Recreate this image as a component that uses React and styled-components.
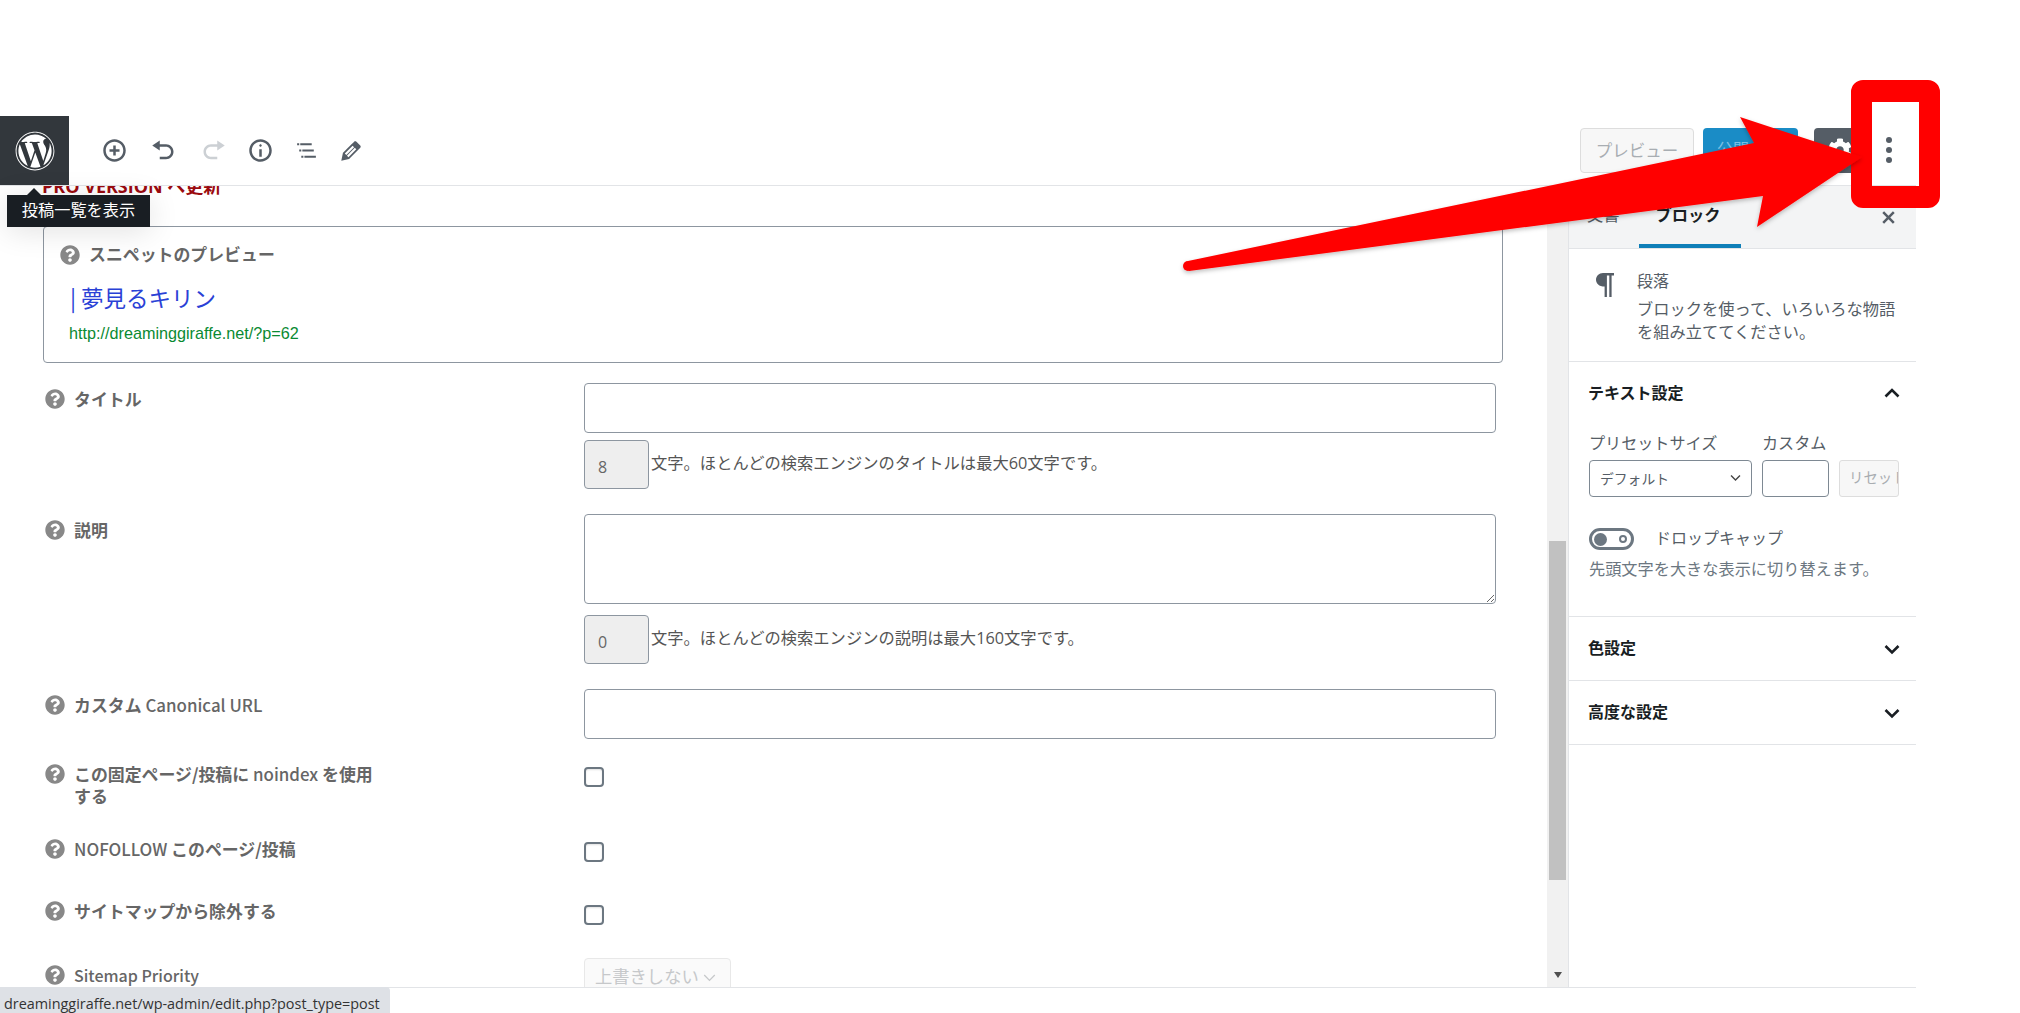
import React from "react";
import styled, { createGlobalStyle } from "styled-components";
import { FaWordpress, FaQuestionCircle, FaCog } from "react-icons/fa";

const Global = createGlobalStyle`
  html, body { margin: 0; padding: 0; background: #fff; overflow: hidden; }
  * { box-sizing: border-box; }
  body { font-family: "Open Sans", "Noto Sans CJK JP", sans-serif; font-size: 16px; color: #555d66; }
`;

const Page = styled.div`position: relative; width: 2020px; height: 1013px; background: #fff; overflow: hidden;`;
const Editor = styled.div`display: flex; flex-direction: column; width: 1916px; height: 1013px; padding-top: 116px;`;

const Header = styled.header`display: flex; align-items: center; height: 70px; border-bottom: 1px solid #e2e4e7; flex: none;`;
const LogoTile = styled.div`display: flex; align-items: center; justify-content: center; width: 69px; height: 69px; background: #32373c; color: #fff; font-size: 40px;`;
const Tools = styled.div`display: flex; align-items: center; margin-left: 21px;`;
const ToolButton = styled.div`display: flex; justify-content: center; align-items: center; width: ${p => p.$w}px; height: 48px; color: ${p => (p.$off ? "#ccd0d4" : "#555d66")};`;
const Actions = styled.div`display: flex; align-items: center; margin-left: auto; padding-right: 4px; padding-bottom: 1px;`;
const PreviewBtn = styled.div`display: flex; align-items: center; justify-content: center; width: 114px; height: 45px; background: #f7f7f7; border: 1px solid #dddddd; border-radius: 4px; color: #a8adb2; font-size: 16.5px; margin-right: 9px;`;
const PublishBtn = styled.div`width: 95px; height: 45px; background: #1a8cc6; border-radius: 4px; color: #7cc0e4; font-size: 16px; line-height: 43px; padding-left: 14px; margin-right: 16px;`;
const GearBtn = styled.div`display: flex; align-items: center; justify-content: center; width: 52px; height: 45px; background: #555d66; border-radius: 4px; color: #fff; font-size: 24px;`;
const MoreBtn = styled.div`display: flex; align-items: center; justify-content: center; width: 46px; height: 45px; color: #555d66;`;

const Main = styled.main`display: flex; flex: none; height: 801px;`;
const Content = styled.div`width: 1547px; height: 801px; overflow: hidden; padding-left: 43px; flex: none;`;
const ProLine = styled.div`margin: -11px 0 29px -1px; font-size: 18px; line-height: 22px; font-weight: 700; color: #9b0a0f;`;
const SnippetBox = styled.section`width: 1460px; height: 137px; border: 1px solid #8d96a0; border-radius: 4px; padding: 17px 26px 0 3px; margin-bottom: 20px;`;
const SnippetHead = styled.div`display: flex; align-items: center; gap: 9px; padding-left: 13px; line-height: 22px; font-weight: 700; font-size: 16.9px; color: #666;`;
const SnippetTitle = styled.div`margin: 16px 0 0 23px; font-size: 22.5px; line-height: 30px; color: #2a41d6; font-family: "Noto Sans CJK JP", sans-serif;`;
const SnippetUrl = styled.div`margin: 10px 0 0 22px; font-size: 16.2px; line-height: 22px; color: #0a8a32; font-family: "Liberation Sans", sans-serif;`;
const HelpIcon = styled(FaQuestionCircle)`width: 20px; height: 20px; color: #888; flex: none;`;

const Rows = styled.div`display: flex; flex-direction: column; gap: 25px;`;
const Row = styled.div`display: grid; grid-template-columns: 541px 912px; min-height: ${p => p.$h}px; flex: none;`;
const Label = styled.div`display: grid; grid-template-columns: 20px 1fr; column-gap: 9px; align-items: start; margin-top: ${p => p.$top}px; padding-left: 2px; width: 332px; font-family: "Noto Sans CJK JP", sans-serif; font-size: 16.9px; line-height: 22px; color: #666;`;
const IconCell = styled.div`display: flex; height: 22px; align-items: center;`;
const LabelText = styled.div`font-weight: 700;`;
const Latin = styled.span`font-weight: 500; font-size: ${p => p.$size || 16.9}px;`;
const Field = styled.div`display: flex; flex-direction: column; align-items: flex-start;`;
const TextInput = styled.input`width: 912px; height: 50px; border: 1px solid #8d96a0; border-radius: 4px; background: #fff; padding: 0 10px; flex: none;`;
const TextArea = styled.textarea`display: block; width: 912px; height: 90px; border: 1px solid #8d96a0; border-radius: 4px; background: #fff; flex: none;`;
const CountRow = styled.div`display: flex; align-items: center; margin-top: ${p => p.$mt}px; font-size: 16.3px; color: #555;`;
const CountBox = styled.input`width: 65px; height: 49px; border: 1px solid #8d96a0; border-radius: 4px; background: #eeeeee; color: #666; padding: 4px 0 0 13px; font: 16px "Open Sans", sans-serif;`;
const CountText = styled.span`margin: -5px 0 0 2px;`;
const CheckBox = styled.input.attrs({ type: "checkbox" })`appearance: none; width: 20px; height: 20px; margin: 0; border: 2px solid #6c7781; border-radius: 4px; background: #fff; box-shadow: inset 0 1px 2px rgba(0,0,0,.12);`;
const DisabledSelect = styled.div`display: flex; align-items: flex-start; width: 147px; height: 50px; border: 1px solid #e8e8e8; border-radius: 4px; background: #fafafa; color: #c6c8ca; font-size: 17.3px; line-height: 24px; padding: 6px 0 0 10px; gap: 4px; svg { margin-top: 6px; }`;

const Track = styled.div`display: flex; flex-direction: column; width: 21px; height: 801px; background: #f1f1f1; padding: 355px 2px 9px; flex: none;`;
const Thumb = styled.div`height: 339px; background: #c1c1c1;`;
const ScrollArrow = styled.div`margin: auto auto 0; width: 0; height: 0; border-left: 4px solid transparent; border-right: 4px solid transparent; border-top: 6px solid #505050;`;

const Sidebar = styled.aside`width: 348px; height: 801px; border-left: 1px solid #e2e4e7; background: #fff; flex: none;`;
const TabBar = styled.div`display: flex; align-items: stretch; height: 63px; background: #f3f4f5; border-bottom: 1px solid #e2e4e7; position: relative;`;
const Tab = styled.div`display: flex; align-items: center; height: 62px; padding: 2px ${p => p.$pr}px 4px ${p => p.$pl}px; font-size: 16.25px; color: ${p => (p.$on ? "#191e23" : "#555d66")}; font-weight: ${p => (p.$on ? 700 : 400)}; border-bottom: 4px solid ${p => (p.$on ? "#0f7fb8" : "transparent")};`;
const CloseBtn = styled.div`display: flex; align-items: center; margin-left: auto; padding: 0 15px 0 0; color: #555d66;`;
const BlockInfo = styled.div`display: grid; grid-template-columns: 68px 1fr; height: 113px; padding: 21px 10px 0 0; border-bottom: 1px solid #e2e4e7;`;
const ParaIcon = styled.div`display: flex; justify-content: center; padding: 2px 0 0 4px; color: #555d66;`;
const BlockTitle = styled.div`font-size: 16px; line-height: 22px; color: #555d66; margin-bottom: 6px;`;
const BlockDesc = styled.div`font-size: 16.25px; line-height: 23px; color: #555d66;`;
const Panel = styled.section`border-bottom: 1px solid #e2e4e7; height: ${p => p.$h}px; padding: 0 16px 0 20px;`;
const PanelHead = styled.div`display: flex; align-items: center; justify-content: space-between; height: ${p => p.$h}px; font-size: 16px; font-weight: 700; color: #191e23;`;
const PanelTitle = styled.span`margin-top: ${p => p.$up}px; margin-left: -1px;`;
const SizeGrid = styled.div`display: grid; grid-template-columns: 163px 67px 60px; column-gap: 10px; row-gap: 6px; margin-top: 8px;`;
const SizeLabel = styled.div`font-size: 16.1px; line-height: 22px; color: #555d66; grid-column: span ${p => p.$span || 1};`;
const SizeSelect = styled.div`display: flex; align-items: center; justify-content: space-between; height: 37px; border: 1px solid #7e8993; border-radius: 4px; padding: 0 10px 2px; font-size: 13.8px; color: #555d66;`;
const SizeInput = styled.input`width: 67px; height: 37px; border: 1px solid #7e8993; border-radius: 4px; background: #fff;`;
const ResetBtn = styled.div`height: 37px; border: 1px solid #dddddd; border-radius: 3px; background: #f7f7f7; color: #a9adb1; font-size: 14.4px; line-height: 34px; padding-left: 9px; overflow: hidden; white-space: nowrap;`;
const ToggleRow = styled.div`display: flex; align-items: center; gap: 21px; margin-top: 31px; font-size: 16px; line-height: 20px; color: #555d66; height: 22px;`;
const ToggleLabel = styled.span`margin-top: -2px;`;
const Toggle = styled.div`display: flex; align-items: center; justify-content: space-between; width: 45px; height: 22px; border: 3px solid #6c7781; border-radius: 11px; padding: 0 4px 0 2px;`;
const ToggleDot = styled.div`width: 13px; height: 13px; border-radius: 50%; background: #6c7781;`;
const ToggleRing = styled.div`width: 8px; height: 8px; border-radius: 50%; border: 2px solid #6c7781;`;
const HelpText = styled.div`margin-top: 8px; font-size: 16.2px; line-height: 22px; color: #6c7781;`;

const Footer = styled.footer`flex: none; height: 26px; border-top: 1px solid #e2e4e7; background: #fff;`;

const Tooltip = styled.div`position: absolute; left: 7px; top: 195px; width: 143px; height: 32px; background: #191e23; color: #fff; font-size: 16.2px; line-height: 31px; text-align: center; box-shadow: 0 4px 30px rgba(0,0,0,.12);
  &::before { content: ""; position: absolute; left: 20px; top: -7px; border-left: 7px solid transparent; border-right: 7px solid transparent; border-bottom: 7px solid #191e23; }`;
const StatusBar = styled.div`position: absolute; left: 0; top: 987px; width: 390px; height: 26px; background: #dee1e6; border-top-right-radius: 4px; color: #333; font-size: 14.4px; line-height: 25px; padding: 4px 0 0 4px; white-space: nowrap;`;
const RedFrame = styled.div`position: absolute; left: 1851px; top: 80px; width: 89px; height: 128px; border-style: solid; border-color: #ff0000; border-width: 22px 21px; border-radius: 12px;`;
const ArrowLayer = styled.svg`position: absolute; left: 0; top: 0; pointer-events: none;`;

const Dash = ({ d, size = 25, box = 20 }) => (
  <svg width={size} height={size} viewBox={`0 0 ${box} ${box}`} fill="currentColor"><path d={d} /></svg>
);
const Chevron = ({ up, size = 16, sw = 2.6, color = "#191e23" }) => (
  <svg width={size} height={size} viewBox="0 0 16 16" fill="none" stroke={color} strokeWidth={sw}>
    <polyline points={up ? "1.5,11.5 8,5 14.5,11.5" : "1.5,5 8,11.5 14.5,5"} />
  </svg>
);

const toolItems = [
  { w: 48.5, d: "M10 1c-5 0-9 4-9 9s4 9 9 9 9-4 9-9-4-9-9-9zm0 16c-3.9 0-7-3.1-7-7s3.1-7 7-7 7 3.1 7 7-3.1 7-7 7zm1-11H9v3H6v2h3v3h2v-3h3V9h-3V6z" },
  { w: 50, d: "M12 5H7V2L1 6l6 4V7h5c2.2 0 4 1.8 4 4s-1.8 4-4 4H7v2h5c3.3 0 6-2.7 6-6s-2.7-6-6-6z" },
  { w: 49, off: true, d: "M8 5h5V2l6 4-6 4V7H8c-2.2 0-4 1.8-4 4s1.8 4 4 4h5v2H8c-3.3 0-6-2.7-6-6s2.7-6 6-6z" },
  { w: 46.5, d: "M9 15h2V9H9v6zm1-10c-.5 0-1 .5-1 1s.5 1 1 1 1-.5 1-1-.5-1-1-1zm0-4c-5 0-9 4-9 9s4 9 9 9 9-4 9-9-4-9-9-9zm0 16c-3.9 0-7-3.1-7-7s3.1-7 7-7 7 3.1 7 7-3.1 7-7 7z" },
  { w: 45, box: 24, d: "M5 5H3v2h2V5zm3 8h11v-2H8v2zm9-8H6v2h11V5zM7 11H5v2h2v-2zm0 8h2v-2H7v2zm3-2v2h11v-2H10z" },
  { w: 44, size: 28, d: "M13.89 3.39l2.71 2.72c.46.46.42 1.24.03 1.64l-8.01 8.02-5.56 1.16 1.16-5.58s7.6-7.63 7.99-8.03c.39-.39 1.22-.39 1.68.07zm-2.73 2.79l-5.59 5.61 1.11 1.11 5.54-5.65zm-2.97 8.23l5.58-5.6-1.07-1.08-5.59 5.6z" },
];

const FieldLabel = ({ top, children }) => (
  <Label $top={top}>
    <IconCell><HelpIcon /></IconCell>
    <LabelText>{children}</LabelText>
  </Label>
);

export default function App() {
  return (
    <Page>
      <Global />
      <Editor>
        <Header>
          <LogoTile><FaWordpress /></LogoTile>
          <Tools>
            {toolItems.map((t, i) => (
              <ToolButton key={i} $w={t.w} $off={t.off}><Dash d={t.d} box={t.box || 20} size={t.size || 25} /></ToolButton>
            ))}
          </Tools>
          <Actions>
            <PreviewBtn>プレビュー</PreviewBtn>
            <PublishBtn>公開</PublishBtn>
            <GearBtn><FaCog /></GearBtn>
            <MoreBtn>
              <svg width="8" height="28" viewBox="0 0 8 28" fill="currentColor">
                <circle cx="4" cy="4" r="3" /><circle cx="4" cy="14" r="3" /><circle cx="4" cy="24" r="3" />
              </svg>
            </MoreBtn>
          </Actions>
        </Header>
        <Main>
          <Content>
            <ProLine>PRO VERSION へ更新</ProLine>
            <SnippetBox>
              <SnippetHead><HelpIcon />スニペットのプレビュー</SnippetHead>
              <SnippetTitle>| 夢見るキリン</SnippetTitle>
              <SnippetUrl>http://dreaminggiraffe.net/?p=62</SnippetUrl>
            </SnippetBox>
            <Rows>
              <Row $h={106}>
                <FieldLabel top={5}>タイトル</FieldLabel>
                <Field>
                  <TextInput />
                  <CountRow $mt={7}><CountBox readOnly value="8" /><CountText>文字。ほとんどの検索エンジンのタイトルは最大60文字です。</CountText></CountRow>
                </Field>
              </Row>
              <Row $h={150}>
                <FieldLabel top={5}>説明</FieldLabel>
                <Field>
                  <TextArea />
                  <CountRow $mt={11}><CountBox readOnly value="0" /><CountText>文字。ほとんどの検索エンジンの説明は最大160文字です。</CountText></CountRow>
                </Field>
              </Row>
              <Row $h={53}>
                <FieldLabel top={5}>カスタム <Latin>Canonical URL</Latin></FieldLabel>
                <Field><TextInput /></Field>
              </Row>
              <Row $h={50}>
                <FieldLabel top={-4}>この固定ページ/投稿に <Latin>noindex</Latin> を使用する</FieldLabel>
                <Field><CheckBox /></Field>
              </Row>
              <Row $h={38}>
                <FieldLabel top={-4}><Latin>NOFOLLOW</Latin> このページ/投稿</FieldLabel>
                <Field><CheckBox /></Field>
              </Row>
              <Row $h={28}>
                <FieldLabel top={-5}>サイトマップから除外する</FieldLabel>
                <Field><CheckBox /></Field>
              </Row>
              <Row $h={50}>
                <FieldLabel top={6}><Latin $size={16}>Sitemap Priority</Latin></FieldLabel>
                <Field><DisabledSelect>上書きしない<Chevron size={13} sw={1.6} color="#c6c8ca" /></DisabledSelect></Field>
              </Row>
            </Rows>
          </Content>
          <Track>
            <Thumb />
            <ScrollArrow />
          </Track>
          <Sidebar>
            <TabBar>
              <Tab $pl={18} $pr={19}>文書</Tab>
              <Tab $on $pl={17} $pr={20}>ブロック</Tab>
              <CloseBtn><Dash d="M14.95 6.46L11.41 10l3.54 3.54-1.41 1.41L10 11.42l-3.53 3.53-1.42-1.42L8.58 10 5.05 6.47l1.42-1.42L10 8.58l3.54-3.53z" /></CloseBtn>
            </TabBar>
            <BlockInfo>
              <ParaIcon>
                <svg width="20" height="26" viewBox="0 0 20 26" fill="currentColor">
                  <path d="M8 1h11v2.4h-2.4V25h-2.3V3.4h-2.4V25H9.6V14.6C4 14.6 1 11.5 1 7.8S4 1 8 1z" />
                </svg>
              </ParaIcon>
              <div>
                <BlockTitle>段落</BlockTitle>
                <BlockDesc>ブロックを使って、いろいろな物語を組み立ててください。</BlockDesc>
              </div>
            </BlockInfo>
            <Panel $h={255}>
              <PanelHead $h={62}><PanelTitle $up={-2}>テキスト設定</PanelTitle><Chevron up /></PanelHead>
              <SizeGrid>
                <SizeLabel>プリセットサイズ</SizeLabel>
                <SizeLabel $span={2}>カスタム</SizeLabel>
                <SizeSelect>デフォルト<Chevron size={11} sw={2} color="#444" /></SizeSelect>
                <SizeInput />
                <ResetBtn>リセット</ResetBtn>
              </SizeGrid>
              <ToggleRow><Toggle><ToggleDot /><ToggleRing /></Toggle><ToggleLabel>ドロップキャップ</ToggleLabel></ToggleRow>
              <HelpText>先頭文字を大きな表示に切り替えます。</HelpText>
            </Panel>
            <Panel $h={64}><PanelHead $h={63}><PanelTitle $up={-4}>色設定</PanelTitle><Chevron /></PanelHead></Panel>
            <Panel $h={64}><PanelHead $h={63}><PanelTitle $up={-4}>高度な設定</PanelTitle><Chevron /></PanelHead></Panel>
          </Sidebar>
        </Main>
        <Footer />
      </Editor>
      <Tooltip>投稿一覧を表示</Tooltip>
      <StatusBar>dreaminggiraffe.net/wp-admin/edit.php?post_type=post</StatusBar>
      <RedFrame />
      <ArrowLayer width="2020" height="1013" viewBox="0 0 2020 1013">
        <defs>
          <filter id="sh" x="-5%" y="-20%" width="110%" height="140%">
            <feDropShadow dx="0" dy="2" stdDeviation="2" floodColor="#000" floodOpacity="0.25" />
          </filter>
        </defs>
        <g fill="#ff0000" filter="url(#sh)">
          <polygon points="1188,261 1754,143 1740,117 1862,157 1757,227 1763,196 1189,271" />
          <circle cx="1188" cy="266" r="5" />
        </g>
      </ArrowLayer>
    </Page>
  );
}
